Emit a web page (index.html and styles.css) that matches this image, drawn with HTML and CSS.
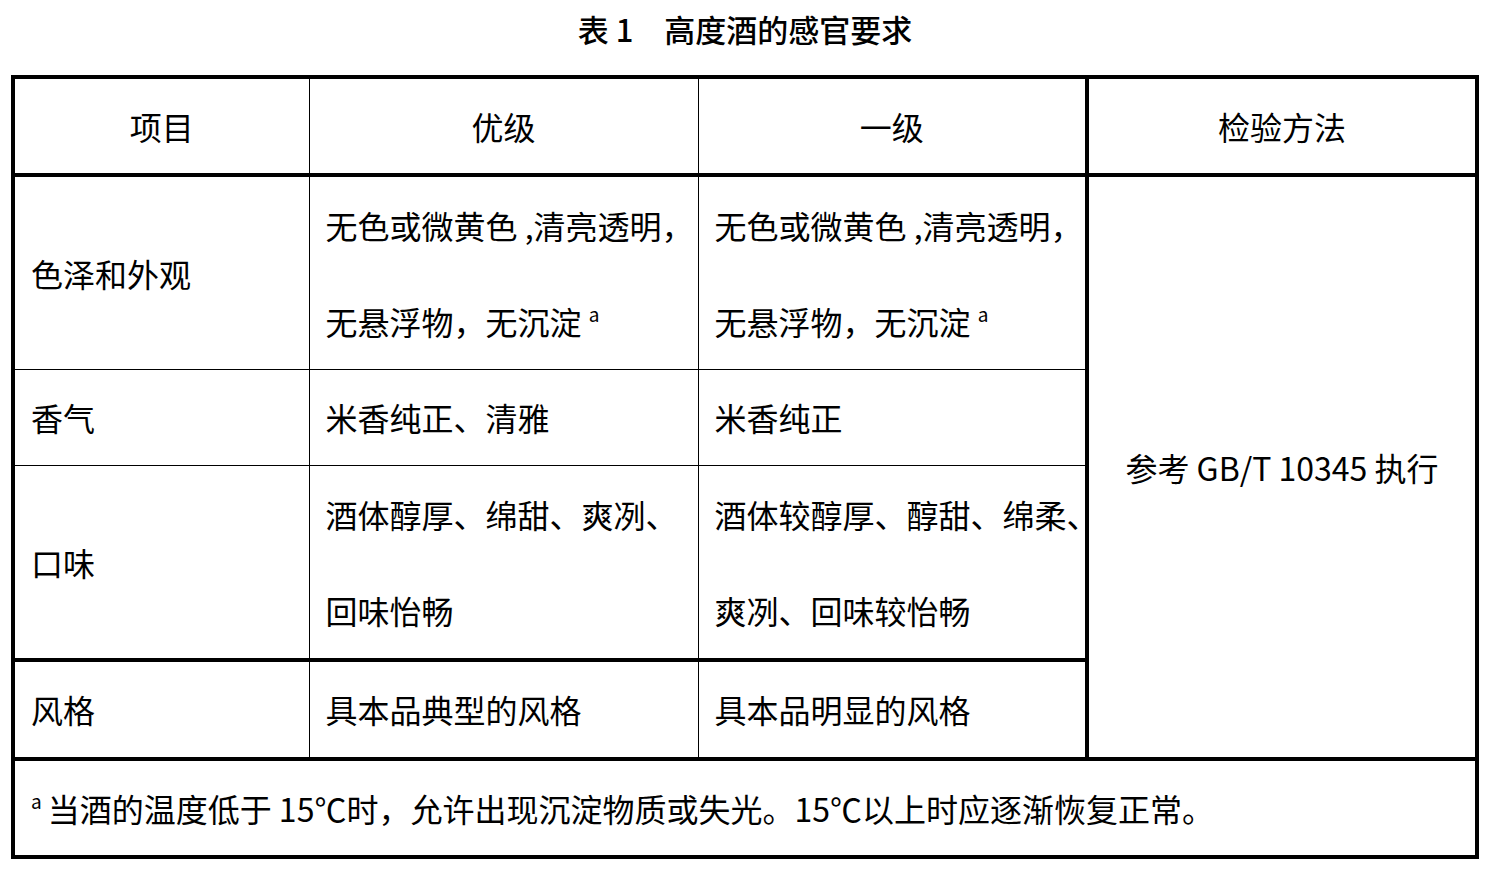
FILE: index.html
```html
<!DOCTYPE html>
<html lang="zh-CN">
<head>
<meta charset="utf-8">
<title>表 1 高度酒的感官要求</title>
<link rel="stylesheet" href="styles.css">
</head>
<body>
<div class="page">
  <div class="caption">表 1　高度酒的感官要求</div>
  <table class="spec">
    <colgroup>
      <col class="c1"><col class="c2"><col class="c3"><col class="c4">
    </colgroup>
    <thead>
      <tr>
        <th>项目</th>
        <th>优级</th>
        <th>一级</th>
        <th class="method">检验方法</th>
      </tr>
    </thead>
    <tbody>
      <tr class="tall">
        <td>色泽和外观</td>
        <td>无色或微黄色 ,清亮透明，<br>无悬浮物，无沉淀 <sup class="note">a</sup></td>
        <td>无色或微黄色 ,清亮透明，<br>无悬浮物，无沉淀 <sup class="note">a</sup></td>
        <td class="method center" rowspan="4">参考 GB/T 10345 执行</td>
      </tr>
      <tr>
        <td>香气</td>
        <td>米香纯正、清雅</td>
        <td>米香纯正</td>
      </tr>
      <tr class="tall">
        <td>口味</td>
        <td>酒体醇厚、绵甜、爽冽、<br>回味怡畅</td>
        <td>酒体较醇厚、醇甜、绵柔、<br>爽冽、回味较怡畅</td>
      </tr>
      <tr class="thick-top">
        <td>风格</td>
        <td>具本品典型的风格</td>
        <td>具本品明显的风格</td>
      </tr>
      <tr class="thick-top foot">
        <td colspan="4"><sup class="note foot-note">a</sup>当酒的温度低于 15℃时，允许出现沉淀物质或失光。15℃以上时应逐渐恢复正常。</td>
      </tr>
    </tbody>
  </table>
</div>
</body>
</html>
```

FILE: styles.css
```css
html, body {
  margin: 0;
  padding: 0;
  background: #ffffff;
}

body {
  font-family: "Noto Sans CJK SC", "Noto Sans", sans-serif;
  color: #000000;
}

.page {
  padding-left: 11px;
  width: 1468px;
}

.caption {
  height: 75px;
  line-height: 58px;
  text-align: center;
  font-size: 31px;
  font-weight: 500;
}

.spec {
  width: 1468px;
  table-layout: fixed;
  border-collapse: collapse;
  border: 4px solid #000;
  font-size: 32px;
}

.c1 { width: 296px; }
.c2 { width: 389px; }
.c3 { width: 389px; }
.c4 { width: 390px; }

.spec th,
.spec td {
  border: 1px solid #000;
  padding: 0 0 0 16px;
  line-height: 95px;
  text-align: left;
  vertical-align: middle;
  white-space: nowrap;
  font-weight: 400;
}

.spec tr.tall td {
  line-height: 96px;
}

.spec th {
  text-align: center;
  padding: 0;
  line-height: 94px;
  border-bottom: 4px solid #000;
}

.spec .method {
  border-left: 4px solid #000;
}

.spec .center {
  text-align: center;
  padding: 0;
}

.spec tr.thick-top td {
  border-top: 4px solid #000;
}

.spec tr.foot td {
  line-height: 94px;
}

.note {
  font-size: 19px;
  line-height: 0;
  vertical-align: 13px;
}

.foot-note {
  margin-right: 6px;
}
```
